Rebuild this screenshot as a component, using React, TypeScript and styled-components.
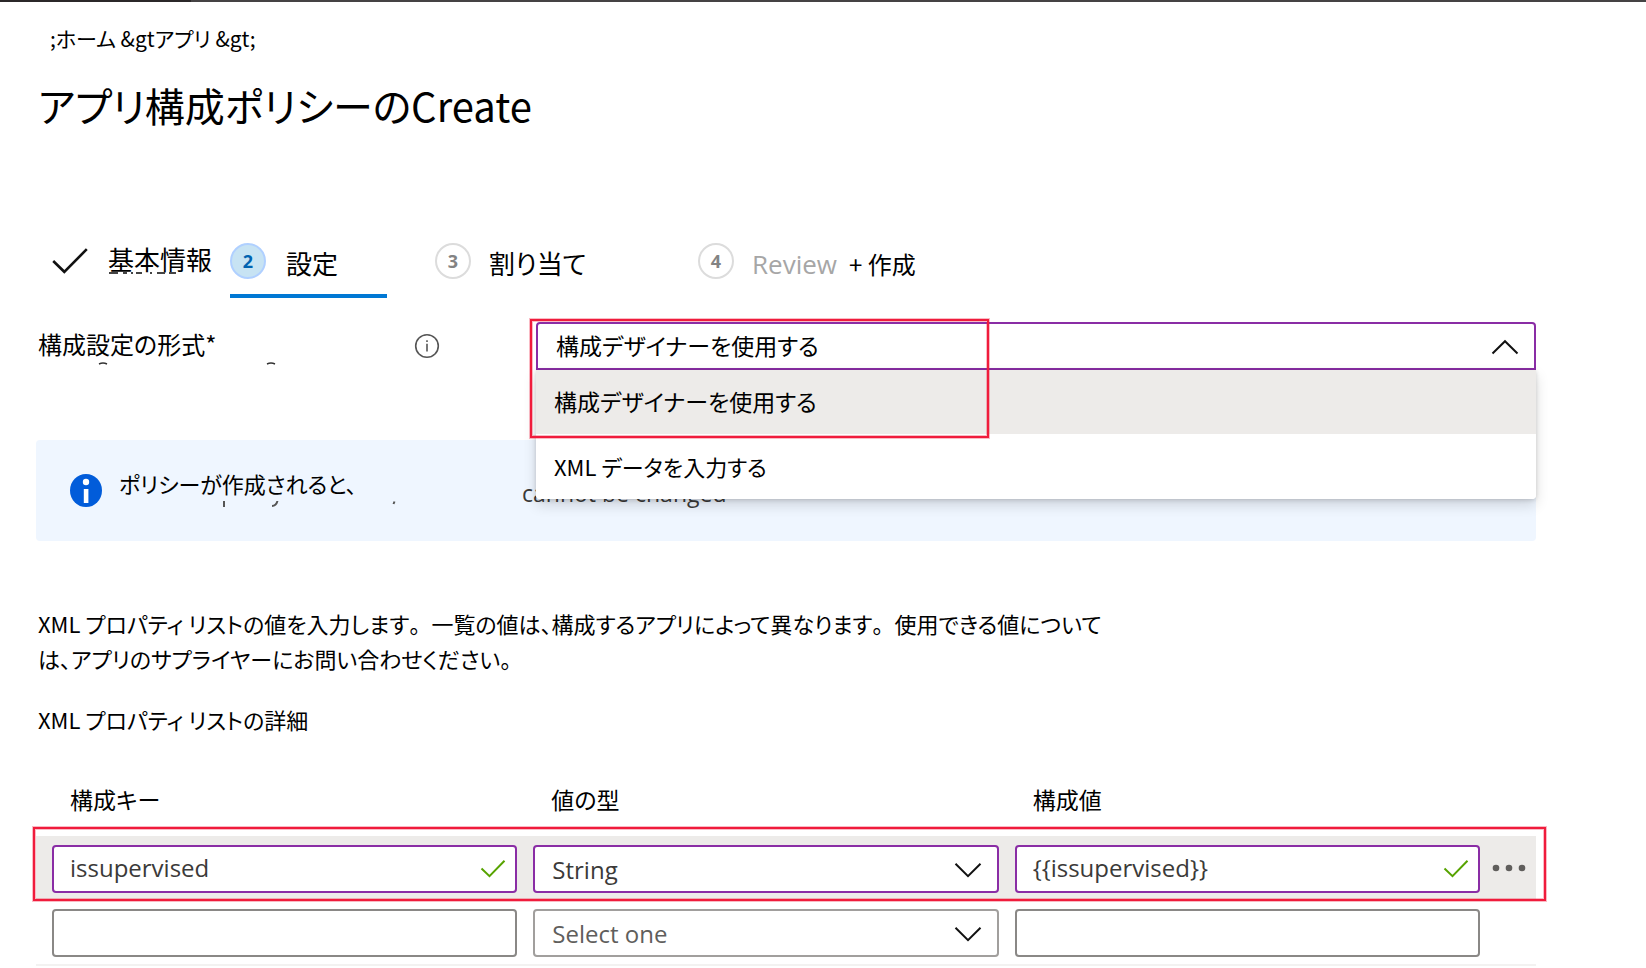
import React, { useState } from "react";
import styled, { createGlobalStyle } from "styled-components";

const japanese = `"Noto Sans CJK JP", "Noto Sans", sans-serif`;
const latin = `"Open Sans", "Noto Sans CJK JP", sans-serif`;

const color = {
  ink: "#000000",
  text: "#3b3a39",
  muted: "#605e5c",
  faint: "#a6a6a6",
  purple: "#8a2da5",
  blue: "#0078d4",
  red: "#f01c3c",
  grey: "#edebe9",
  green: "#57a300",
};

const GlobalStyle = createGlobalStyle`
  *, *::before, *::after { box-sizing: border-box; }
  body {
    margin: 0;
    background: #fff;
    color: ${color.ink};
    font-family: ${japanese};
    font-size: 22px;
    font-feature-settings: "palt";
  }
  button, input, select { font: inherit; color: inherit; font-feature-settings: inherit; }
  svg { flex: none; }
`;

const TopBar = styled.div`
  height: 2px;
  background: linear-gradient(to right, #2b2829 191px, #454344 191px);
`;

const Page = styled.main`
  padding: 20px 110px 0 36px;
`;

const Breadcrumb = styled.nav`
  padding-left: 14px;
  font-size: 21px;
  line-height: 32px;
  a { color: inherit; text-decoration: none; }
`;

const Title = styled.h1`
  margin: 23px 0 0;
  padding-left: 2px;
  font-size: 40px;
  font-weight: 400;
  line-height: 56px;
`;

const Steps = styled.nav`
  display: flex;
  gap: 48px;
  margin-top: 110px;
  padding-left: 16px;
`;

const Step = styled.button<{ $width: number; $gap: number; $active?: boolean }>`
  position: relative;
  display: flex;
  align-items: center;
  gap: ${(p) => p.$gap}px;
  width: ${(p) => p.$width}px;
  flex: none;
  padding: 0 0 15px;
  border: 0;
  border-bottom: 4px solid ${(p) => (p.$active ? color.blue : "transparent")};
  background: none;
  font-size: 26px;
  line-height: 36px;
  white-space: nowrap;
`;

const StepNumber = styled.span<{ $active?: boolean }>`
  flex: none;
  width: 36px;
  height: 36px;
  border: 2px solid ${(p) => (p.$active ? "#b0d0ff" : "#dcdcdc")};
  border-radius: 50%;
  background: ${(p) => (p.$active ? "#c7e3f3" : "#fff")};
  color: ${(p) => (p.$active ? "#0063b1" : "#838383")};
  font-family: ${latin};
  font-size: 18px;
  font-weight: 700;
  line-height: 32px;
  text-align: center;
`;

const StepText = styled.span<{ $done?: boolean }>`
  height: 36px;
  padding-top: 2px;
  line-height: ${(p) => (p.$done ? 28 : 36)}px;
`;

const ReviewText = styled.span`
  margin-right: 12px;
  color: ${color.faint};
  font-family: ${latin};
`;

const SmallText = styled.span`
  font-size: 24px;
`;

const Field = styled.div`
  display: flex;
  margin-top: 24px;
`;

const FieldLabel = styled.div`
  position: relative;
  display: flex;
  align-items: center;
  justify-content: space-between;
  flex: none;
  width: 500px;
  height: 48px;
  padding: 0 96px 0 2px;
  font-size: 24px;
  line-height: 32px;
  label { padding-bottom: 4px; }
`;

const Combo = styled.div`
  position: relative;
  z-index: 2;
  flex: 1;
  height: 48px;
`;

const SelectWrap = styled.div`
  position: relative;
  svg { position: absolute; right: 17px; top: 17px; pointer-events: none; }
`;

const Select = styled.select<{ $border: string; $open?: boolean; $muted?: boolean }>`
  display: block;
  appearance: none;
  width: 100%;
  height: 48px;
  padding: 0 56px ${(p) => (p.$open ? "2px 18px" : "0 17px")};
  border: 2px solid ${(p) => p.$border};
  border-radius: ${(p) => (p.$open ? "4px 4px 0 0" : "4px")};
  background: #fff;
  color: ${(p) => (p.$open ? color.ink : p.$muted ? color.muted : color.text)};
  font-family: ${(p) => (p.$open ? japanese : latin)};
  font-size: ${(p) => (p.$open ? 23 : 24)}px;
`;

const Options = styled.ul`
  position: absolute;
  top: 48px;
  left: 0;
  right: 0;
  margin: 0;
  padding: 0;
  list-style: none;
  border-radius: 0 0 4px 4px;
  background: #fff;
  box-shadow: 0 6px 14px rgba(0, 0, 0, 0.14), 0 1px 4px rgba(0, 0, 0, 0.16);
`;

const Option = styled.button<{ $selected?: boolean }>`
  display: block;
  width: 100%;
  height: ${(p) => (p.$selected ? 64 : 65)}px;
  padding: 0 18px 2px;
  border: 0;
  border-radius: ${(p) => (p.$selected ? "0" : "0 0 4px 4px")};
  background: ${(p) => (p.$selected ? color.grey : "#fff")};
  font-size: ${(p) => (p.$selected ? 23 : 22)}px;
  text-align: left;
`;

const Highlight = styled.div`
  position: absolute;
  z-index: 3;
  border: 2px solid ${color.red};
  box-shadow: 0 0 0 1px rgba(240, 28, 60, 0.3), inset 0 0 0 1px rgba(240, 28, 60, 0.3);
  pointer-events: none;
`;

const ComboHighlight = styled(Highlight)`
  top: -3px;
  left: -6px;
  width: 459px;
  height: 119px;
`;

const RowHighlight = styled(Highlight)`
  inset: -9px -10px -1px -3px;
`;

const Banner = styled.section`
  position: relative;
  display: flex;
  align-items: flex-start;
  height: 101px;
  margin-top: 70px;
  padding: 27px 34px;
  border-radius: 4px;
  background: #eff6ff;
  line-height: 32px;
`;

const BannerIcon = styled.svg`
  margin: 7px 17px 0 0;
`;

const BannerText = styled.p`
  flex: none;
  width: 403px;
  margin: 0;
`;

const BannerTail = styled.span`
  padding-top: 10px;
  color: ${color.text};
  font-family: ${latin};
  font-size: 23px;
`;

const Remnant = styled.svg<{ $left: number; $top: number }>`
  position: absolute;
  left: ${(p) => p.$left}px;
  top: ${(p) => p.$top}px;
  pointer-events: none;
`;

const Description = styled.p`
  margin: 65px 0 0;
  padding-left: 2px;
  line-height: 35px;
  white-space: nowrap;
`;

const FullStop = styled.span`
  font-feature-settings: normal;
`;

const Subtitle = styled.h2`
  margin: 27px 0 0;
  padding-left: 2px;
  font-size: 22px;
  font-weight: 400;
  line-height: 32px;
`;

const Table = styled.table`
  display: block;
  margin-top: 48px;
  thead, tbody { display: block; }
`;

const Row = styled.tr<{ $active?: boolean; $head?: boolean }>`
  position: relative;
  display: grid;
  grid-template-columns: 1fr 1fr 1fr 40px;
  column-gap: 16px;
  padding: ${(p) => (p.$head ? "0 0 21px 16px" : "9px 0 7px 16px")};
  border-bottom: ${(p) => (p.$active || p.$head ? "0" : "2px solid #f3f2f1")};
  background: ${(p) => (p.$active ? color.grey : "#fff")};
`;

const HeadCell = styled.th`
  padding: 0 0 0 18px;
  font-size: 23px;
  font-weight: 400;
  line-height: 32px;
  text-align: left;
`;

const Cell = styled.td`
  position: relative;
  padding: 0;
`;

const ActionsCell = styled.td`
  padding: 0;
`;

const TextInput = styled.input<{ $border: string }>`
  display: block;
  width: 100%;
  height: 48px;
  padding: 0 56px 3px 16px;
  border: 2px solid ${(p) => p.$border};
  border-radius: 4px;
  background: #fff;
  color: ${color.text};
  font-family: ${latin};
  font-size: 24px;
  outline: 0;
`;

const ValidMark = styled.svg`
  position: absolute;
  right: 11px;
  top: 14px;
`;

const MoreButton = styled.button`
  display: flex;
  align-items: center;
  width: 40px;
  height: 46px;
  margin-left: -4px;
  padding: 0;
  border: 0;
  background: none;
`;

const Chevron = ({ up }: { up?: boolean }) => (
  <svg width="28" height="16" viewBox="0 0 28 16" fill="none" stroke="#111" strokeWidth="2">
    <path d={up ? "M1.5 14.5 14 2.2 26.5 14.5" : "M1.5 1.8 14 14.2 26.5 1.8"} />
  </svg>
);

const Valid = () => (
  <ValidMark width="26" height="20" viewBox="0 0 26 20" fill="none" stroke={color.green} strokeWidth="2">
    <path d="M1.5 9.5 9.5 17.2 24.5 1.8" />
  </ValidMark>
);

const FORMATS = ["構成デザイナーを使用する", "XML データを入力する"];

const COLUMNS = ["構成キー", "値の型", "構成値"];

export default function App() {
  const [format, setFormat] = useState(FORMATS[0]);

  return (
    <>
      <GlobalStyle />
      <TopBar />
      <Page lang="ja">
        <Breadcrumb aria-label="階層">
          <a href="#home">;ホーム &amp;gt</a>
          <a href="#apps">アプリ &amp;gt;</a>
        </Breadcrumb>
        <Title>アプリ構成ポリシーのCreate</Title>

        <Steps aria-label="手順">
          <Step type="button" $width={130} $gap={20}>
            <svg width="36" height="26" viewBox="0 0 36 26" fill="none" stroke="#111" strokeWidth="2.6">
              <path d="M1.2 13 12.3 23.8 34.8 1.2" />
            </svg>
            <StepText $done>基本情報</StepText>
            <Remnant $left={56} $top={29} width="70" height="3" viewBox="0 0 70 3" stroke="#444" strokeWidth="2" fill="none">
              <path d="M1 1H10M15 1H19M23 1H25M28 1H34M42 1H44M49 1H57M61 1H68" />
            </Remnant>
          </Step>
          <Step type="button" $width={157} $gap={20} $active aria-current="step">
            <StepNumber $active>2</StepNumber>
            <StepText>設定</StepText>
          </Step>
          <Step type="button" $width={215} $gap={18}>
            <StepNumber>3</StepNumber>
            <StepText>割り当て</StepText>
          </Step>
          <Step type="button" $width={215} $gap={18}>
            <StepNumber>4</StepNumber>
            <StepText>
              <ReviewText>Review</ReviewText>
              <SmallText>+ 作成</SmallText>
            </StepText>
          </Step>
        </Steps>

        <Field>
          <FieldLabel>
            <label htmlFor="format">構成設定の形式*</label>
            <svg width="26" height="26" viewBox="0 0 26 26" fill="none" stroke="#555" strokeWidth="1.6">
              <circle cx="13" cy="13" r="11.3" />
              <path d="M13 10.8V18.5M13 7.2V9" />
            </svg>
            <Remnant $left={62} $top={40} width="180" height="3" viewBox="0 0 180 3" stroke="#333" strokeWidth="1.5" fill="none">
              <path d="M1 2Q5 .2 9 2M169 2Q173 .2 177 2" />
            </Remnant>
          </FieldLabel>
          <Combo>
            <SelectWrap>
              <Select
                id="format"
                $border={color.purple}
                $open
                value={format}
                onChange={(e) => setFormat(e.target.value)}
              >
                {FORMATS.map((name) => (
                  <option key={name}>{name}</option>
                ))}
              </Select>
              <Chevron up />
            </SelectWrap>
            <Options>
              {FORMATS.map((name) => (
                <li key={name}>
                  <Option type="button" $selected={name === format} onClick={() => setFormat(name)}>
                    {name}
                  </Option>
                </li>
              ))}
            </Options>
            <ComboHighlight />
          </Combo>
        </Field>

        <Banner>
          <BannerIcon width="32" height="33" viewBox="0 0 32 33">
            <ellipse cx="16" cy="16.5" rx="16" ry="16.5" fill="#015cda" />
            <circle cx="16" cy="8" r="3.2" fill="#fff" />
            <rect x="13.8" y="15" width="4.6" height="14" fill="#fff" />
          </BannerIcon>
          <BannerText>ポリシーが作成されると、</BannerText>
          <BannerTail>cannot be changed</BannerTail>
          <Remnant $left={186} $top={61} width="175" height="7" viewBox="0 0 175 7" stroke="#555" strokeWidth="2" fill="none">
            <path d="M2 0V6M55.5 0Q54 5 50 5M172.5 .5 171.5 3" />
          </Remnant>
        </Banner>

        <Description>
          XML プロパティ リストの値を入力します<FullStop>。</FullStop>一覧の値は、構成するアプリによって異なります
          <FullStop>。</FullStop>使用できる値について
          <br />
          は、アプリのサプライヤーにお問い合わせください。
        </Description>
        <Subtitle>XML プロパティ リストの詳細</Subtitle>

        <Table>
          <thead>
            <Row $head>
              {COLUMNS.map((name) => (
                <HeadCell key={name} scope="col">{name}</HeadCell>
              ))}
            </Row>
          </thead>
          <tbody>
            <Row $active>
              <Cell>
                <TextInput aria-label="構成キー" $border={color.purple} defaultValue="issupervised" />
                <Valid />
              </Cell>
              <Cell>
                <SelectWrap>
                  <Select aria-label="値の型" $border={color.purple} defaultValue="String">
                    <option>String</option>
                  </Select>
                  <Chevron />
                </SelectWrap>
              </Cell>
              <Cell>
                <TextInput aria-label="構成値" $border={color.purple} defaultValue="{{issupervised}}" />
                <Valid />
              </Cell>
              <ActionsCell>
                <MoreButton type="button" aria-label="その他">
                  <svg width="34" height="8" viewBox="0 0 34 8" fill="#605e5c">
                    <circle cx="4" cy="4" r="3.3" />
                    <circle cx="17" cy="4" r="3.3" />
                    <circle cx="30" cy="4" r="3.3" />
                  </svg>
                </MoreButton>
                <RowHighlight />
              </ActionsCell>
            </Row>
            <Row>
              <Cell>
                <TextInput aria-label="構成キー" $border="#8a8886" />
              </Cell>
              <Cell>
                <SelectWrap>
                  <Select aria-label="値の型" $border="#a19f9d" $muted defaultValue="Select one">
                    <option>Select one</option>
                  </Select>
                  <Chevron />
                </SelectWrap>
              </Cell>
              <Cell>
                <TextInput aria-label="構成値" $border="#8a8886" />
              </Cell>
              <ActionsCell />
            </Row>
          </tbody>
        </Table>
      </Page>
    </>
  );
}
